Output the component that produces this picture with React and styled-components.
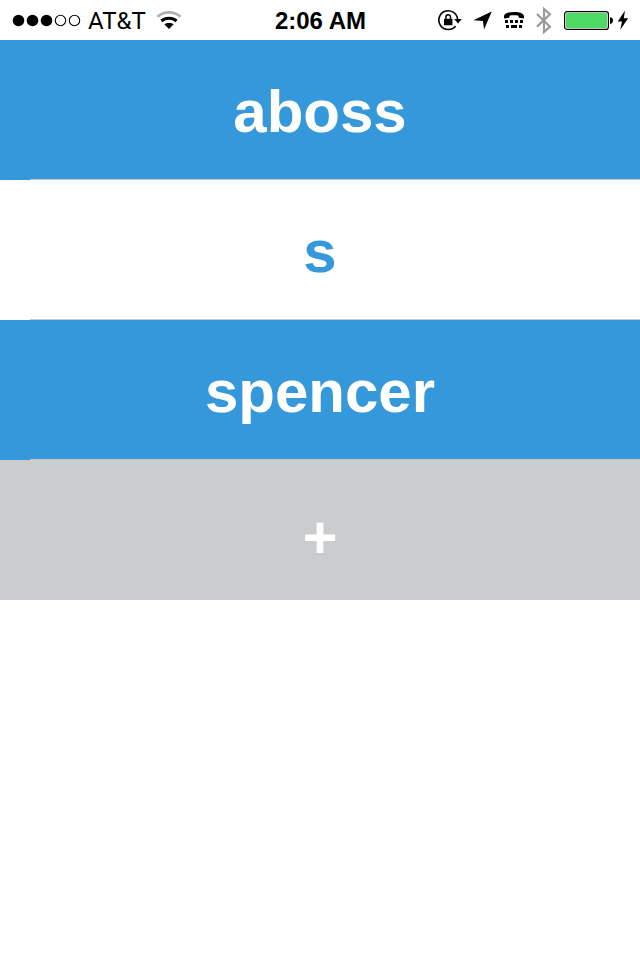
import React from "react";
import styled, { createGlobalStyle } from "styled-components";

const GlobalStyle = createGlobalStyle`
  * { box-sizing: border-box; }
  body {
    margin: 0;
    background: #ffffff;
    font-family: "Liberation Sans", Arial, sans-serif;
  }
`;

const StatusBar = styled.header`
  display: grid;
  grid-template-columns: 1fr auto 1fr;
  align-items: center;
  height: 40px;
  padding: 0 11px 0 12px;
  color: #000000;
  font-size: 24px;
  line-height: 38px;
`;

const StatusGroup = styled.div`
  display: flex;
  align-items: center;
  justify-content: ${({ $end }) => ($end ? "flex-end" : "flex-start")};
  gap: ${({ $gap }) => $gap}px;
`;

const Carrier = styled.span`
  padding-top: 2px;
  font-family: Roboto, sans-serif;
  font-size: 24px;
`;

const Clock = styled.time`
  padding-top: 2px;
  font-weight: 700;
`;

const Icon = styled.svg`
  display: block;
  flex: none;
`;

const List = styled.ul`
  margin: 0;
  padding: 0;
  list-style: none;
`;

const Item = styled.li`
  display: flex;
  flex-direction: column;
  background: ${({ $fill }) => $fill};

  &:not(:last-child)::after {
    content: "";
    height: 1px;
    margin: -1px 0 0 30px;
    background: #c8c7cc;
  }
`;

const RowButton = styled.button`
  width: 100%;
  height: 140px;
  padding: 4px 0 0;
  border: 0;
  background: transparent;
  color: ${({ $ink }) => $ink};
  font: 700 60px/70px "Liberation Sans", Arial, sans-serif;
  text-align: center;
  cursor: pointer;
`;

const AddButton = styled(RowButton)`
  padding-top: 16px;
`;

const blue = "#3498db";
const white = "#ffffff";
const gray = "#c9cdce";

const friends = [
  { name: "aboss", fill: blue, ink: white },
  { name: "s", fill: white, ink: blue },
  { name: "spencer", fill: blue, ink: white },
];

function Signal() {
  return (
    <Icon width="69" height="14" viewBox="0 0 69 14" aria-label="Signal strength">
      {[6.5, 20.5, 34.5].map((x) => (
        <circle key={x} cx={x} cy="7.5" r="5.8" />
      ))}
      {[48.5, 62.5].map((x) => (
        <circle key={x} cx={x} cy="7.5" r="5.2" fill="none" stroke="#000" strokeWidth="1.1" />
      ))}
    </Icon>
  );
}

function Wifi() {
  return (
    <Icon width="26" height="20" viewBox="0 0 26 20" aria-label="Wi-Fi" fill="none">
      <path d="M1.4 6.8C8 .8 18 .8 24.6 6.8" stroke="#b2b2b2" strokeWidth="2.8" />
      <path d="M5.4 11C9.800 7.2 16.2 7.2 20.6 11" stroke="#000" strokeWidth="3" />
      <path d="M8.300 14.3C10.8 12.4 15.2 12.4 17.7 14.3L13 19Z" fill="#000" />
    </Icon>
  );
}

function RotationLock() {
  return (
    <Icon width="24" height="22" viewBox="0 0 24 22" aria-label="Rotation lock">
      <path d="M19.6 10.2A9.4 9.4 0 1 0 17.6 17" fill="none" stroke="#000" strokeWidth="1.6" />
      <path d="M16.2 10H23.8L20 14.4Z" />
      <rect x="6" y="9.8" width="8.4" height="6.4" rx=".5" />
      <path d="M7.9 10.2V8a2.3 2.3 0 0 1 4.6 0V10.2" fill="none" stroke="#000" strokeWidth="1.5" />
    </Icon>
  );
}

function Location() {
  return (
    <Icon width="19" height="20" viewBox="0 0 19 20" aria-label="Location">
      <path d="M18.8 1.6L11 19.6L10 11L.4 10.2Z" />
    </Icon>
  );
}

function Teletype() {
  return (
    <Icon width="20" height="18" viewBox="0 0 20 18" aria-label="TTY">
      <path d="M0 5.7C0 2.1 4.5 1 10 1s10 1.1 10 4.7V6.7q0 .8-.8.7l-4-.6q-.7-.1-.7-.8V4.8C12 4.2 8 4.2 5.5 4.8V6q0 .7-.7.8l-4 .6q-.8.1-.8-.7Z" />
      <path d="M1 9h3v3H1zM6 9h3v3H6zM11 9h3v3h-3zM16 9h3v3h-3zM2 14h3v3H2zM7 14h6v3H7zM15 14h3v3h-3z" />
    </Icon>
  );
}

function Bluetooth() {
  return (
    <Icon width="16" height="28" viewBox="0 0 16 28" aria-label="Bluetooth">
      <path
        d="M1 8L14 20.600L8 26V3L14 8.2L1 20.6"
        fill="none"
        stroke="#9b9b9b"
        strokeWidth="2.2"
      />
    </Icon>
  );
}

function Battery() {
  return (
    <Icon width="50" height="20" viewBox="0 0 50 20" aria-label="Battery">
      <rect x=".6" y="1.6" width="43.8" height="17.8" rx="2.5" fill="none" stroke="#000" strokeWidth="1.2" />
      <rect x="2" y="3" width="41" height="15" rx="1.2" fill="#4cd964" />
      <path d="M46 7.2q3 .4 3 3.4t-3 3.4Z" />
    </Icon>
  );
}

function Bolt() {
  return (
    <Icon width="12" height="20" viewBox="0 0 12 20" aria-label="Charging">
      <path d="M8 .4L.8 11.4H5L3.2 19.8L11.2 8.2H6.8Z" />
    </Icon>
  );
}

export default function App() {
  return (
    <>
      <GlobalStyle />
      <StatusBar>
        <StatusGroup $gap={10}>
          <StatusGroup $gap={7}>
            <Signal />
            <Carrier>AT&amp;T</Carrier>
          </StatusGroup>
          <Wifi />
        </StatusGroup>
        <Clock>2:06 AM</Clock>
        <StatusGroup $end $gap={12}>
          <StatusGroup $gap={11}>
            <RotationLock />
            <Location />
          </StatusGroup>
          <Teletype />
          <Bluetooth />
          <StatusGroup $gap={3}>
            <Battery />
            <Bolt />
          </StatusGroup>
        </StatusGroup>
      </StatusBar>
      <main>
        <List>
          {friends.map(({ name, fill, ink }) => (
            <Item key={name} $fill={fill}>
              <RowButton type="button" $ink={ink}>
                {name}
              </RowButton>
            </Item>
          ))}
          <Item $fill={gray}>
            <AddButton type="button" $ink={white} aria-label="Add friend">
              +
            </AddButton>
          </Item>
        </List>
      </main>
    </>
  );
}
